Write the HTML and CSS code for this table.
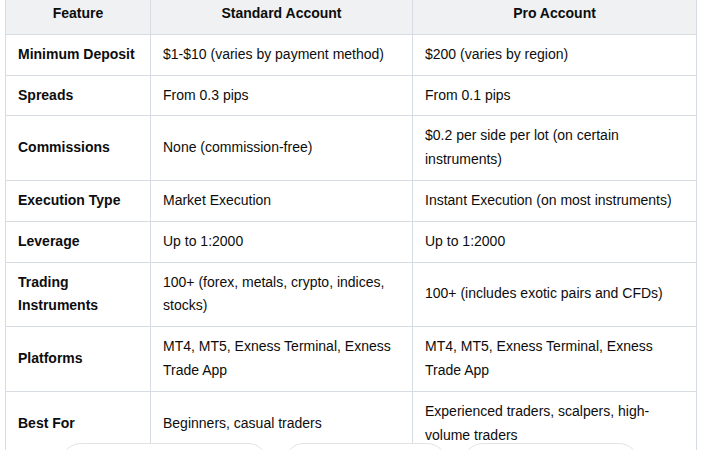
FILE: index.html
```html
<!DOCTYPE html>
<html>
<head>
<meta charset="utf-8">
<link rel="stylesheet" href="styles.css">
</head>
<body>
<div class="page">
  <div class="table-wrap">
    <table class="cmp">
      <colgroup>
        <col class="c1"><col class="c2"><col class="c3">
      </colgroup>
      <thead>
        <tr><th>Feature</th><th>Standard Account</th><th>Pro Account</th></tr>
      </thead>
      <tbody>
        <tr><td class="feat">Minimum Deposit</td><td>$1-$10 (varies by payment method)</td><td>$200 (varies by region)</td></tr>
        <tr><td class="feat">Spreads</td><td>From 0.3 pips</td><td>From 0.1 pips</td></tr>
        <tr><td class="feat">Commissions</td><td>None (commission-free)</td><td>$0.2 per side per lot (on certain instruments)</td></tr>
        <tr><td class="feat">Execution Type</td><td>Market Execution</td><td>Instant Execution (on most instruments)</td></tr>
        <tr><td class="feat">Leverage</td><td>Up to 1:2000</td><td>Up to 1:2000</td></tr>
        <tr><td class="feat">Trading Instruments</td><td>100+ (forex, metals, crypto, indices, stocks)</td><td>100+ (includes exotic pairs and CFDs)</td></tr>
        <tr><td class="feat">Platforms</td><td>MT4, MT5, Exness Terminal, Exness Trade App</td><td>MT4, MT5, Exness Terminal, Exness Trade App</td></tr>
        <tr><td class="feat">Best For</td><td>Beginners, casual traders</td><td>Experienced traders, scalpers, high-volume traders</td></tr>
      </tbody>
    </table>
  </div>
  <div class="chips">
    <div class="chip chip-a"></div>
    <div class="chip chip-b"></div>
    <div class="chip chip-c"></div>
  </div>
</div>
</body>
</html>
```
FILE: styles.css
```css
html, body {
  margin: 0;
  padding: 0;
  background: #ffffff;
  overflow: hidden;
}
.page {
  position: relative;
  width: 702px;
  height: 450px;
  overflow: hidden;
  font-family: "Liberation Sans", Arial, sans-serif;
  font-size: 14px;
  color: #0d0d0d;
}
.table-wrap {
  padding-left: 5px;
  margin-top: -7px;
}
.cmp {
  border-collapse: collapse;
  table-layout: fixed;
  width: 691px;
}
.c1 { width: 145px; }
.c2 { width: 262px; }
.c3 { width: 284px; }
.cmp th, .cmp td {
  border: 1px solid #d6dce2;
  padding: 8px 12px;
  line-height: 1.7;
  vertical-align: middle;
  text-align: left;
}
.cmp th {
  background: #eff1f3;
  font-weight: 700;
  text-align: center;
}
.cmp td.feat {
  font-weight: 700;
}
.chips {
  position: absolute;
  left: 61px;
  top: 443px;
  display: flex;
  gap: 16px;
}
.chip {
  height: 40px;
  border: 1px solid #e3e3e3;
  border-radius: 20px;
  background: #ffffff;
  box-sizing: border-box;
}
.chip-a { width: 207px; }
.chip-b { width: 163px; }
.chip-c { width: 176px; }
```
